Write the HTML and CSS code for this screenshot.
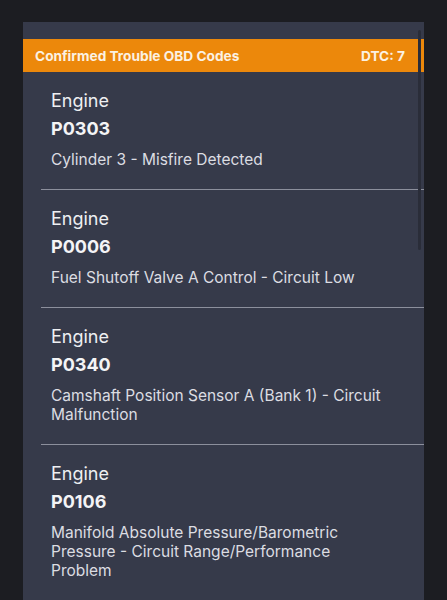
FILE: index.html
```html
<!DOCTYPE html>
<html>
<head>
<meta charset="utf-8">
<link rel="stylesheet" href="styles.css">
</head>
<body>
<div class="panel">
  <div class="scrollbar"></div>
  <div class="header">
    <span class="title">Confirmed Trouble OBD Codes</span>
    <span class="count">DTC: 7</span>
  </div>
  <div class="list">
    <div class="item">
      <div class="system">Engine</div>
      <div class="code">P0303</div>
      <div class="desc">Cylinder 3 - Misfire Detected</div>
    </div>
    <div class="item">
      <div class="system">Engine</div>
      <div class="code">P0006</div>
      <div class="desc">Fuel Shutoff Valve A Control - Circuit Low</div>
    </div>
    <div class="item">
      <div class="system">Engine</div>
      <div class="code">P0340</div>
      <div class="desc">Camshaft Position Sensor A (Bank 1) - Circuit Malfunction</div>
    </div>
    <div class="item">
      <div class="system">Engine</div>
      <div class="code">P0106</div>
      <div class="desc">Manifold Absolute Pressure/Barometric Pressure - Circuit Range/Performance Problem</div>
    </div>
  </div>
</div>
</body>
</html>
```
FILE: styles.css
```css
html, body {
  margin: 0;
  padding: 0;
  background: #1c1d22;
  height: 600px;
  overflow: hidden;
  font-family: Inter, "Noto Sans", sans-serif;
}
.panel {
  position: relative;
  margin: 22px 0 0 23px;
  width: 401px;
  height: 578px;
  background: #363a4a;
  padding-top: 17px;
  box-sizing: border-box;
}
.scrollbar {
  position: absolute;
  left: 395px;
  top: 8px;
  width: 3px;
  height: 220px;
  border-radius: 2px;
  background: #2a2d39;
}
.header {
  height: 33px;
  background: #ec880b;
  display: flex;
  align-items: center;
  justify-content: space-between;
  padding: 0 19px 0 12px;
  color: #fbf1e2;
  font-weight: 700;
  font-size: 13.7px;
}
.item {
  margin-left: 18px;
  padding: 18px 0 20px 10px;
  border-bottom: 1px solid #8c8f9c;
}
.system {
  font-size: 18px;
  line-height: 22px;
  color: #eeeff2;
}
.code {
  margin-top: 6px;
  font-size: 18px;
  line-height: 22px;
  font-weight: 700;
  color: #f4f4f6;
}
.desc {
  margin-top: 10px;
  font-size: 15.5px;
  line-height: 19px;
  color: #dcdde2;
  padding-right: 34px;
}
```
